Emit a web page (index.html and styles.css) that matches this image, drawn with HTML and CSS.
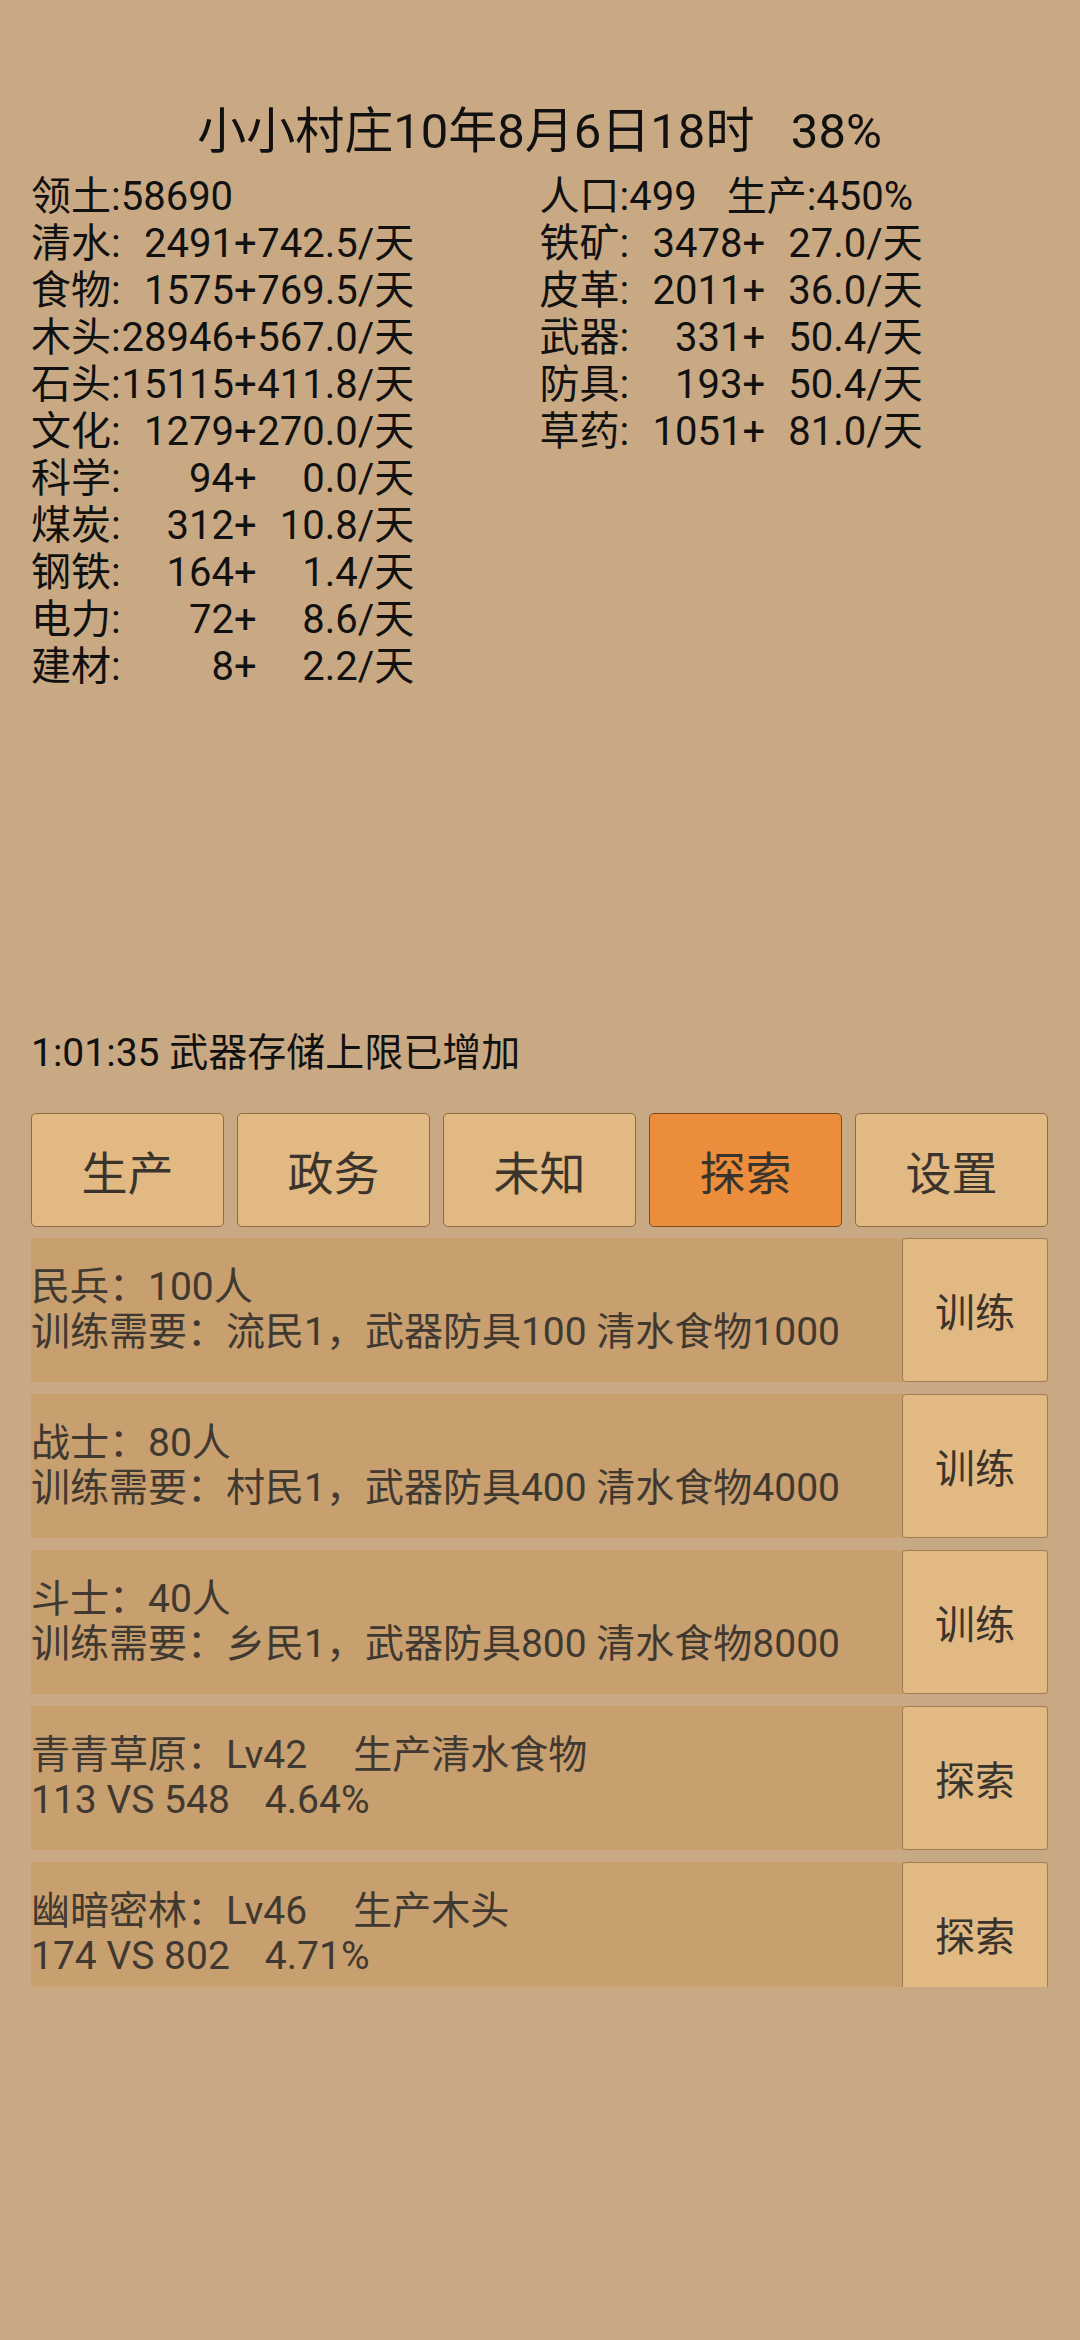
FILE: index.html
```html
<!doctype html>
<html lang="zh">
  <head>
    <meta charset="utf-8">
    <meta name="viewport" content="width=device-width, initial-scale=1">
    <title>小小村庄</title>
    <link rel="stylesheet" href="styles.css">
  </head>
  <body>
    <div class="page">
      <h1 class="title">小小村庄10年8月6日18时   38%</h1>

      <div class="stats">
        <div class="col">
          <div class="stat">领土:58690</div>
          <div class="stat"><span class="name">清水:</span><span class="amt">2491</span>+<span class="rate">742.5</span>/天</div>
          <div class="stat"><span class="name">食物:</span><span class="amt">1575</span>+<span class="rate">769.5</span>/天</div>
          <div class="stat"><span class="name">木头:</span><span class="amt">28946</span>+<span class="rate">567.0</span>/天</div>
          <div class="stat"><span class="name">石头:</span><span class="amt">15115</span>+<span class="rate">411.8</span>/天</div>
          <div class="stat"><span class="name">文化:</span><span class="amt">1279</span>+<span class="rate">270.0</span>/天</div>
          <div class="stat"><span class="name">科学:</span><span class="amt">94</span>+<span class="rate">0.0</span>/天</div>
          <div class="stat"><span class="name">煤炭:</span><span class="amt">312</span>+<span class="rate">10.8</span>/天</div>
          <div class="stat"><span class="name">钢铁:</span><span class="amt">164</span>+<span class="rate">1.4</span>/天</div>
          <div class="stat"><span class="name">电力:</span><span class="amt">72</span>+<span class="rate">8.6</span>/天</div>
          <div class="stat"><span class="name">建材:</span><span class="amt">8</span>+<span class="rate">2.2</span>/天</div>
        </div>
        <div class="col">
          <div class="stat">人口:499<span class="gap">生产:450%</span></div>
          <div class="stat"><span class="name">铁矿:</span><span class="amt">3478</span>+<span class="rate">27.0</span>/天</div>
          <div class="stat"><span class="name">皮革:</span><span class="amt">2011</span>+<span class="rate">36.0</span>/天</div>
          <div class="stat"><span class="name">武器:</span><span class="amt">331</span>+<span class="rate">50.4</span>/天</div>
          <div class="stat"><span class="name">防具:</span><span class="amt">193</span>+<span class="rate">50.4</span>/天</div>
          <div class="stat"><span class="name">草药:</span><span class="amt">1051</span>+<span class="rate">81.0</span>/天</div>
        </div>
      </div>

      <p class="log">1:01:35 武器存储上限已增加</p>

      <nav class="tabs">
        <button class="tab">生产</button>
        <button class="tab">政务</button>
        <button class="tab">未知</button>
        <button class="tab active">探索</button>
        <button class="tab">设置</button>
      </nav>

      <div class="list">
        <div class="row">
          <div class="info">
            <div>民兵：100人</div>
            <div>训练需要：流民1，武器防具100 清水食物1000</div>
          </div>
          <button class="act">训练</button>
        </div>
        <div class="row">
          <div class="info">
            <div>战士：80人</div>
            <div>训练需要：村民1，武器防具400 清水食物4000</div>
          </div>
          <button class="act">训练</button>
        </div>
        <div class="row">
          <div class="info">
            <div>斗士：40人</div>
            <div>训练需要：乡民1，武器防具800 清水食物8000</div>
          </div>
          <button class="act">训练</button>
        </div>
        <div class="row">
          <div class="info">
            <div>青青草原：Lv42<span class="sep">生产清水食物</span></div>
            <div>113 VS 548<span class="pct">4.64%</span></div>
          </div>
          <button class="act">探索</button>
        </div>
        <div class="row">
          <div class="info">
            <div>幽暗密林：Lv46<span class="sep">生产木头</span></div>
            <div>174 VS 802<span class="pct">4.71%</span></div>
          </div>
          <button class="act">探索</button>
        </div>
      </div>
    </div>
  </body>
</html>
```

FILE: styles.css
```css
body {
  margin: 0;
  background-color: #c9a983;
  font-family: Roboto, "Noto Sans CJK SC", sans-serif;
  color: #111;
}

.page {
  padding: 102px 32px 0 31px;
}

.title {
  margin: 0;
  font-size: 49px;
  font-weight: normal;
  line-height: 60px;
  text-align: center;
  white-space: pre;
}

.stats {
  display: grid;
  grid-template-columns: 1fr 1fr;
  margin-top: 11px;
  font-size: 40px;
  line-height: 47px;
}

.stat {
  white-space: pre;
}

.stat .gap {
  margin-left: 30px;
}

.name {
  display: inline-block;
  width: 90px;
}

.amt {
  display: inline-block;
  width: 113px;
  text-align: right;
}

.rate {
  display: inline-block;
  width: 101px;
  text-align: right;
}

.log {
  margin: 340px 0 0;
  font-size: 39px;
  line-height: 47px;
}

.tabs {
  display: flex;
  gap: 13px;
  margin-top: 36px;
}

.tab {
  flex: 1;
  height: 114px;
  padding: 0;
  border: 1px solid #8d6b45;
  border-radius: 5px;
  background-color: #e2b982;
  font-family: inherit;
  font-size: 46px;
  color: #3b342d;
}

.tab.active {
  background-color: #eb8d3b;
  border-color: #7d4a1e;
}

.list {
  height: 749px;
  margin-top: 11px;
  overflow: hidden;
}

.row {
  display: flex;
  height: 144px;
  margin-bottom: 12px;
  background-color: #c89f6e;
}

.info {
  flex: 1;
  display: flex;
  flex-direction: column;
  justify-content: center;
  font-size: 39px;
  line-height: 45px;
  color: #3f3931;
}

.sep {
  margin-left: 46px;
}

.pct {
  margin-left: 35px;
}

.act {
  width: 146px;
  padding: 0;
  border: 1px solid #a07d52;
  border-radius: 4px;
  background-color: #e2b982;
  font-family: inherit;
  font-size: 40px;
  color: #3b342d;
}
```
